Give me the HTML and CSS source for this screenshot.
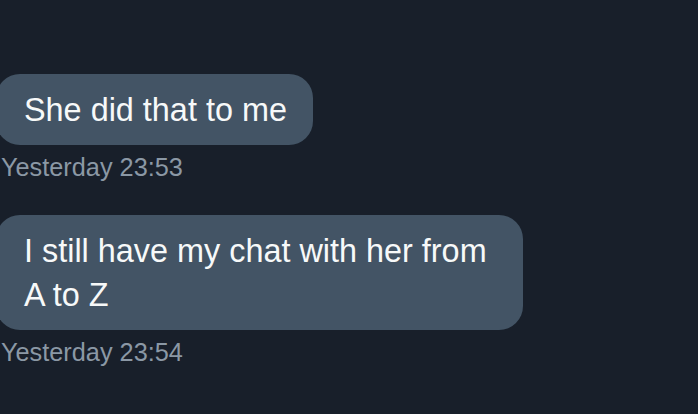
FILE: index.html
```html
<!DOCTYPE html>
<html lang="en">
<head>
    <meta charset="UTF-8">
    <meta name="viewport" content="width=device-width, initial-scale=1.0">
    <title>Messages</title>
    <link rel="stylesheet" href="styles.css">
</head>
<body>
    <div class="thread">
        <div class="message">
            <div class="bubble">She did that to me</div>
            <div class="time">Yesterday 23:53</div>
        </div>
        <div class="message">
            <div class="bubble">I still have my chat with her from A to Z</div>
            <div class="time">Yesterday 23:54</div>
        </div>
    </div>
</body>
</html>
```

FILE: styles.css
```css
body {
    margin: 0;
    background: #181f2a;
    font-family: 'Liberation Sans', Arial, sans-serif;
    height: 414px;
    overflow: hidden;
}
.thread {
    display: flex;
    flex-direction: column;
    align-items: flex-start;
    gap: 33px;
    padding-top: 74px;
}
.message {
    display: flex;
    flex-direction: column;
    align-items: flex-start;
}
.bubble {
    box-sizing: border-box;
    max-width: 527px;
    margin-left: -4px;
    padding: 13.5px 26px 13.5px 28px;
    background: #435465;
    color: #f7f9f9;
    border-radius: 24px;
    font-size: 32.4px;
    line-height: 44px;
}
.time {
    margin: 7px 0 0 1px;
    color: #8b98a5;
    font-size: 25.3px;
    line-height: 30px;
}
```
